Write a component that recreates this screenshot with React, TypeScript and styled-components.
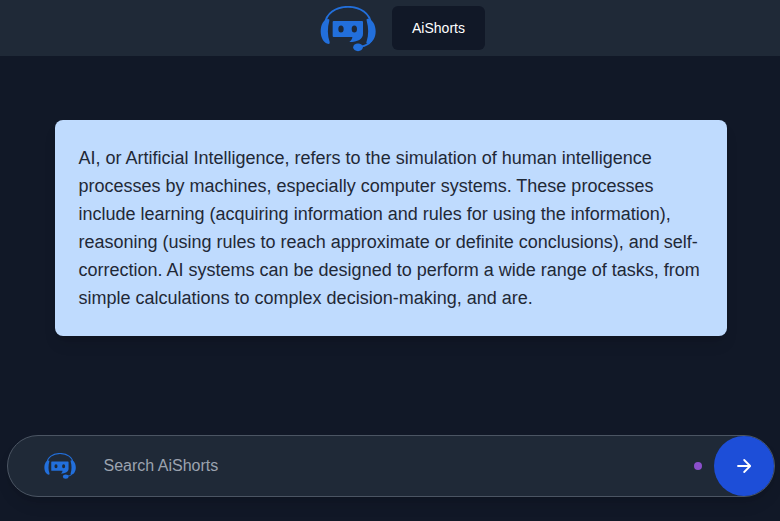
import React from "react";
import styled, { createGlobalStyle } from "styled-components";

const GlobalStyle = createGlobalStyle`
  *, *::before, *::after { box-sizing: border-box; }
  body {
    margin: 0;
    background: #111827;
    font-family: "Liberation Sans", Arial, sans-serif;
    overflow: hidden;
  }
`;

const Page = styled.div`
  display: flex;
  flex-direction: column;
  height: 521px;
  background: #111827;
`;

const Header = styled.header`
  display: flex;
  align-items: flex-start;
  justify-content: center;
  flex: none;
  gap: 16px;
  height: 56px;
  padding: 6px 0 0 25px;
  background: #1f2937;
`;

const Logo = styled.svg<{ $width: number }>`
  display: block;
  flex: none;
  width: ${({ $width }) => $width}px;
  height: auto;
  color: #226fdb;
`;

const NavButton = styled.button`
  width: 93px;
  height: 44px;
  padding: 0;
  border: 0;
  border-radius: 6px;
  background: #111827;
  color: #fff;
  font: 14px/20px "Liberation Sans", Arial, sans-serif;
`;

const Main = styled.main`
  flex: 1;
  padding: 64px 0 0 55px;
`;

const Answer = styled.article`
  width: 672px;
  padding: 24px 24.5px 24px 23.5px;
  border-radius: 8px;
  background: #bfdbfe;
  box-shadow: 0 10px 15px -3px rgb(0 0 0 / 0.1), 0 4px 6px -4px rgb(0 0 0 / 0.1);
`;

const AnswerText = styled.p`
  margin: 0;
  color: #1f2937;
  font-size: 18px;
  line-height: 28px;
`;

const SearchBar = styled.form`
  display: flex;
  align-items: center;
  flex: none;
  width: 768px;
  height: 62px;
  margin: 0 0 24px 7px;
  padding-left: 36px;
  border: 1px solid #4b5563;
  border-radius: 31px;
  background: #1f2937;
  box-shadow: 0 10px 15px -3px rgb(0 0 0 / 0.1), 0 4px 6px -4px rgb(0 0 0 / 0.1);
`;

const SearchInput = styled.input`
  flex: 1;
  min-width: 0;
  height: 24px;
  margin-left: 27.5px;
  padding: 0;
  border: 0;
  outline: 0;
  background: transparent;
  color: #fff;
  font: 16px/24px "Liberation Sans", Arial, sans-serif;
  &::placeholder { color: #9ca3af; opacity: 1; }
`;

const StatusDot = styled.span`
  width: 8px;
  height: 8px;
  margin-right: 12px;
  border-radius: 50%;
  background: #8b4fcb;
`;

const SendButton = styled.button`
  display: grid;
  place-items: center;
  width: 60px;
  height: 60px;
  padding: 0;
  border: 0;
  border-radius: 30px;
  background: #1d4ed8;
  color: #fff;
`;

function BotLogo({ width }: { width: number }) {
  return (
    <Logo $width={width} viewBox="6 12 168 138" fill="currentColor" aria-hidden="true">
      <path d="M21 66C24 35 52 14.500 90 14.500S156 35 159 66" fill="none" stroke="currentColor" strokeWidth="5.500" />
      <path d="M31 51C17 51 8 68 8 88s10 37 24 38q4 0 3-6c-7-20-7-43-1-64q1-5-3-5z" />
      <path d="M149 50c14 1 24 18 24 38s-10 36-24 37q-6 0-3-7c6-19 6-42 0-62q-2-6 3-6z" />
      <path fillRule="evenodd" d="M47 57h85q3 0 3 3v35c0 16-16 25-41 25 6-5 9-10 9-15H47q-3 0-3-3V60q0-3 3-3zM61 81a8 10.500 0 1 0 16 0a8 10.500 0 1 0-16 0zM101 81a8 10.500 0 1 0 16 0a8 10.500 0 1 0-16 0z" />
      <path d="M160 116c-6 9-15 15-32 18" fill="none" stroke="currentColor" strokeWidth="5" />
      <ellipse cx="120" cy="136" rx="14.500" ry="11.500" />
    </Logo>
  );
}

export default function App() {
  return (
    <>
      <GlobalStyle />
      <Page>
        <Header>
          <BotLogo width={56} />
          <NavButton type="button">AiShorts</NavButton>
        </Header>
        <Main>
          <Answer>
            <AnswerText>
              AI, or Artificial Intelligence, refers to the simulation of human intelligence
              processes by machines, especially computer systems. These processes include
              learning (acquiring information and rules for using the information), reasoning
              (using rules to reach approximate or definite conclusions), and self-correction.
              AI systems can be designed to perform a wide range of tasks, from simple
              calculations to complex decision-making, and are.
            </AnswerText>
          </Answer>
        </Main>
        <SearchBar onSubmit={(event) => event.preventDefault()}>
          <BotLogo width={32} />
          <SearchInput placeholder="Search AiShorts" aria-label="Search AiShorts" />
          <StatusDot />
          <SendButton type="submit" aria-label="Send">
            <svg width="14" height="14" viewBox="0 0 14 14" fill="none" stroke="currentColor" strokeWidth="1.8" strokeLinecap="round" strokeLinejoin="round">
              <path d="M1 7h12M7.200 1l6 6-6 6" />
            </svg>
          </SendButton>
        </SearchBar>
      </Page>
    </>
  );
}
